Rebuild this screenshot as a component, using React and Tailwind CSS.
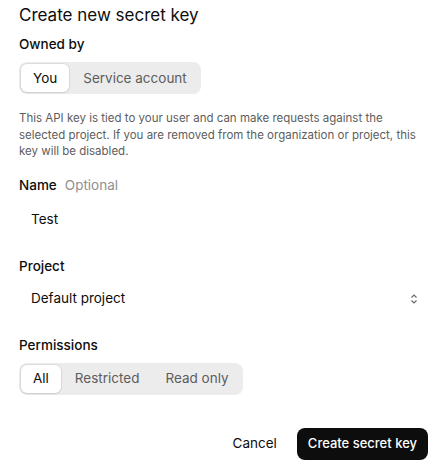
import React, { useState } from 'react';

const font = { fontFamily: 'Inter, "Liberation Sans", sans-serif' };

function Segmented({ options, value, onChange }) {
    return (
        <div className="inline-flex h-8 items-center gap-0.5 rounded-lg bg-[#ececec] p-0.5">
            {options.map((opt) => (
                <button
                    key={opt}
                    onClick={() => onChange(opt)}
                    className={
                        value === opt
                            ? 'h-7 rounded-md bg-white px-3 text-[13.5px] text-[#0d0d0d] shadow-[0_0_0_1px_rgba(0,0,0,0.06),0_1px_2px_rgba(0,0,0,0.08)]'
                            : 'h-7 rounded-md px-3 text-[13.5px] text-[#5d5d5d]'
                    }
                >
                    {opt}
                </button>
            ))}
        </div>
    );
}

export default function App() {
    const [owner, setOwner] = useState('You');
    const [perm, setPerm] = useState('All');

    return (
        <div style={font} className="h-[466px] w-[440px] bg-white px-[19px] pt-[3px] text-[#0d0d0d]">
            <h2 className="text-[17px] leading-[24px]">Create new secret key</h2>

            <div className="mt-[7px] text-[13.5px] leading-5 font-medium">Owned by</div>
            <div className="mt-[8px]">
                <Segmented options={['You', 'Service account']} value={owner} onChange={setOwner} />
            </div>

            <p className="mt-[16px] max-w-[400px] text-[11.5px] leading-[16.5px] text-[#5d5d5d]">
                This API key is tied to your user and can make requests against the selected project. If you are removed
                from the organization or project, this key will be disabled.
            </p>

            <div className="mt-[15px] flex items-baseline gap-2 text-[13.5px] leading-5">
                <span className="font-medium">Name</span>
                <span className="text-[#8f8f8f]">Optional</span>
            </div>
            <div className="mt-[7px] flex h-9 items-center px-3 text-[13.5px]">Test</div>

            <div className="mt-[18px] text-[13.5px] leading-5 font-medium">Project</div>
            <div className="mt-[5px] flex h-9 items-center justify-between pl-3 pr-[5px] -mr-[2px] text-[13.5px]">
                <span>Default project</span>
                <svg width="8" height="12" viewBox="0 0 8 12" fill="none" stroke="#6b6b6b" strokeWidth="1.2">
                    <path d="M1.5 4.5 4 2l2.5 2.5M1.5 7.5 4 10l2.5-2.5" />
                </svg>
            </div>

            <div className="mt-[18px] text-[13.5px] leading-5 font-medium">Permissions</div>
            <div className="mt-[8px]">
                <Segmented options={['All', 'Restricted', 'Read only']} value={perm} onChange={setPerm} />
            </div>

            <div className="mt-[33px] flex items-center justify-end gap-2 -mr-[7px]">
                <button className="h-8 rounded-lg px-3 text-[13.5px]">Cancel</button>
                <button className="h-8 rounded-lg bg-[#0d0d0d] px-[11px] text-[13px] font-medium text-white">
                    Create secret key
                </button>
            </div>
        </div>
    );
}
